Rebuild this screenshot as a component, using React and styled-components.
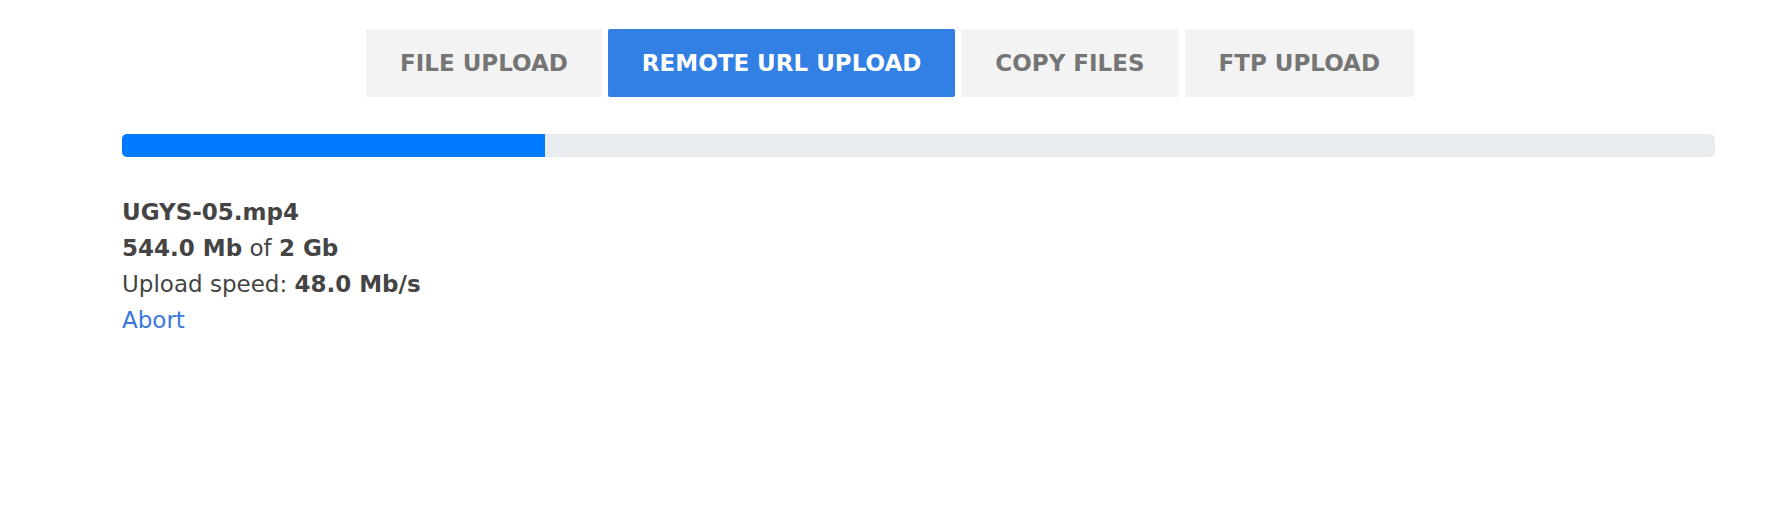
import React from "react";
import styled, { createGlobalStyle } from "styled-components";

const Global = createGlobalStyle`
  html, body {
    margin: 0;
    padding: 0;
    background: #ffffff;
  }
  body {
    font-family: "DejaVu Sans", "Inter", sans-serif;
    color: #444444;
  }
`;

const Page = styled.div`
  display: flex;
  flex-direction: column;
  padding-top: 29px;
`;

const TabBar = styled.nav`
  display: flex;
  justify-content: center;
  gap: 6px;
  padding-left: 11px;
`;

const Tab = styled.button`
  border: none;
  border-radius: 2px;
  height: 68px;
  padding: 0 34px;
  font-family: inherit;
  font-size: 23px;
  font-weight: 700;
  cursor: pointer;
  background: ${(p) => (p.$active ? "#3380e5" : "#f3f3f3")};
  color: ${(p) => (p.$active ? "#ffffff" : "#757575")};
`;

const Content = styled.section`
  display: flex;
  flex-direction: column;
  padding: 0 54px 0 122px;
`;

const Progress = styled.div`
  margin-top: 37px;
  height: 23px;
  border-radius: 5px;
  background: #e9ecef;
  overflow: hidden;
  display: flex;
`;

const ProgressFill = styled.div`
  background: #007bff;
  height: 100%;
`;

const Details = styled.div`
  margin-top: 37px;
  display: flex;
  flex-direction: column;
  font-size: 23px;
  line-height: 36px;
  color: #444444;
`;

const Line = styled.div`
  font-weight: ${(p) => (p.$bold ? 700 : 400)};
`;

const Strong = styled.b`
  font-weight: 700;
`;

const AbortLink = styled.a`
  align-self: flex-start;
  color: #3a78dc;
  text-decoration: none;
  cursor: pointer;
`;

const tabs = ["FILE UPLOAD", "REMOTE URL UPLOAD", "COPY FILES", "FTP UPLOAD"];

export default function App() {
  const uploaded = 544;
  const total = 2048;
  const pct = (uploaded / total) * 100;
  return (
    <Page>
      <Global />
      <TabBar>
        {tabs.map((t, i) => (
          <Tab key={t} $active={i === 1}>
            {t}
          </Tab>
        ))}
      </TabBar>
      <Content>
        <Progress>
          <ProgressFill style={{ width: `${pct.toFixed(2)}%` }} />
        </Progress>
        <Details>
          <Line $bold>UGYS-05.mp4</Line>
          <Line>
            <Strong>544.0 Mb</Strong> of <Strong>2 Gb</Strong>
          </Line>
          <Line>
            Upload speed: <Strong>48.0 Mb/s</Strong>
          </Line>
          <AbortLink>Abort</AbortLink>
        </Details>
      </Content>
    </Page>
  );
}
